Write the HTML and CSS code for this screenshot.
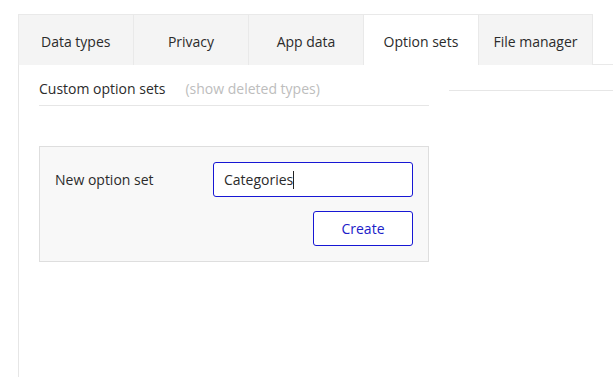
FILE: index.html
```html
<!DOCTYPE html>
<html>
<head>
<meta charset="utf-8">
<link rel="stylesheet" href="styles.css">
</head>
<body>
<div class="page">
  <div class="tabs">
    <div class="tab">Data types</div>
    <div class="tab">Privacy</div>
    <div class="tab">App data</div>
    <div class="tab active">Option sets</div>
    <div class="tab">File manager</div>
    <div class="tab-fill"></div>
  </div>
  <div class="content">
    <div class="left">
      <div class="header">
        <span class="title">Custom option sets</span>
        <span class="deleted">(show deleted types)</span>
      </div>
      <div class="box">
        <div class="row">
          <span class="label">New option set</span>
          <div class="input"><span>Categories</span><span class="caret"></span></div>
        </div>
        <div class="row end">
          <div class="button">Create</div>
        </div>
      </div>
    </div>
    <div class="right">
      <div class="rule"></div>
    </div>
  </div>
</div>
</body>
</html>
```
FILE: styles.css
```css
html, body {
  margin: 0;
  padding: 0;
  background: #fff;
  font-family: "Open Sans", "Noto Sans", sans-serif;
  font-size: 14px;
  color: #2b2b2b;
}
.page {
  padding: 14px 0 0 18px;
  height: 363px;
  display: flex;
  flex-direction: column;
}
.tabs {
  display: flex;
  height: 51px;
}
.tab {
  flex: none;
  background: #f4f4f4;
  border-top: 1px solid #e9e9e9;
  border-left: 1px solid #e9e9e9;
  display: flex;
  align-items: center;
  justify-content: center;
  box-sizing: border-box;
  height: 51px;
  width: 115px;
  padding-top: 3px;
}
.tab:first-child {
  justify-content: flex-start;
  padding-left: 22px;
}
.tab:nth-child(5) {
  border-right: 1px solid #e9e9e9;
}
.tab.active {
  background: #fff;
}
.tab-fill {
  flex: 1;
  border-bottom: 1px solid #e9e9e9;
}
.content {
  flex: 1;
  border-left: 1px solid #e6e6e6;
  display: flex;
  padding-left: 20px;
}
.left {
  width: 390px;
  flex: none;
}
.header {
  height: 41px;
  border-bottom: 1px solid #e6e6e6;
  display: flex;
  align-items: center;
  gap: 20px;
  box-sizing: border-box;
  padding-top: 7px;
}
.deleted {
  color: #bdbdbd;
}
.box {
  margin-top: 40px;
  background: #f8f8f8;
  border: 1px solid #dedede;
  padding: 15px;
  display: flex;
  flex-direction: column;
  gap: 14px;
}
.row {
  display: flex;
  align-items: center;
  justify-content: space-between;
}
.row.end {
  justify-content: flex-end;
}
.input {
  width: 200px;
  height: 35px;
  box-sizing: border-box;
  border: 1px solid #1717d4;
  border-radius: 3px;
  background: #fff;
  display: flex;
  align-items: center;
  padding-left: 10px;
}
.caret {
  display: inline-block;
  width: 1px;
  height: 18px;
  background: #222;
}
.button {
  width: 100px;
  height: 35px;
  box-sizing: border-box;
  border: 1px solid #1717d4;
  border-radius: 3px;
  background: #fff;
  color: #2020c8;
  display: flex;
  align-items: center;
  justify-content: center;
}
.right {
  flex: 1;
  padding-left: 20px;
  padding-top: 25px;
}
.rule {
  border-top: 1px solid #e6e6e6;
}
```
